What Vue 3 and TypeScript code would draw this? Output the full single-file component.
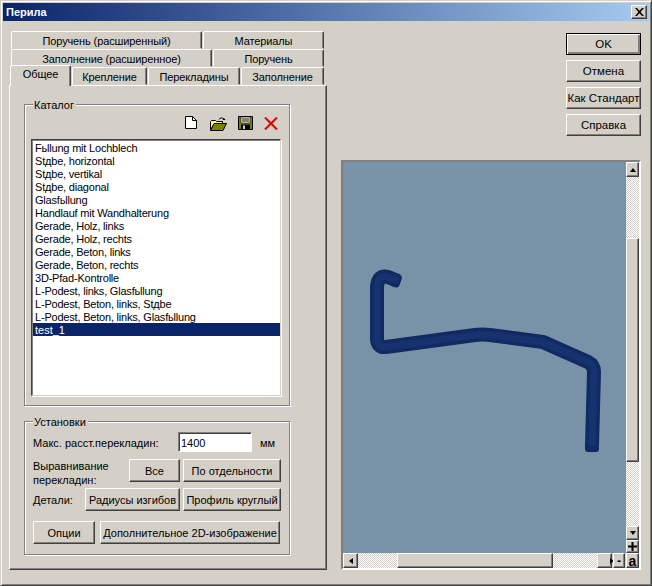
<script setup lang="ts">
const tabRows: { label: string; width: number; active?: boolean }[][] = [
  [
    { label: 'Поручень (расширенный)', width: 191 },
    { label: 'Материалы', width: 121 },
  ],
  [
    { label: 'Заполнение (расширенное)', width: 201 },
    { label: 'Поручень', width: 111 },
  ],
  [
    { label: 'Общее', width: 61, active: true },
    { label: 'Крепление', width: 75 },
    { label: 'Перекладины', width: 92 },
    { label: 'Заполнение', width: 83 },
  ],
]
const catalog = [
  'Fьllung mit Lochblech',
  'Stдbe, horizontal',
  'Stдbe, vertikal',
  'Stдbe, diagonal',
  'Glasfьllung',
  'Handlauf mit Wandhalterung',
  'Gerade, Holz, links',
  'Gerade, Holz, rechts',
  'Gerade, Beton, links',
  'Gerade, Beton, rechts',
  '3D-Pfad-Kontrolle',
  'L-Podest, links, Glasfьllung',
  'L-Podest, Beton, links, Stдbe',
  'L-Podest, Beton, links, Glasfьllung',
  'test_1',
]
const selected = 'test_1'
const tube = 'M398 281 L388 277 Q378 274 377 287 L377 338 Q377 348 386 347 L475 335 Q482 334 490 335 L543 342 L588 362 Q594 365 594 372 L592 446'
</script>

<template>
  <div class="window">
    <div class="titlebar">
      <span class="title">Перила</span>
      <button class="close" type="button" aria-label="Закрыть">
        <svg width="9" height="8" viewBox="0 0 9 8"><path d="M0 0h2l2.500 2.700L7 0h2L5.500 4 9 8H7L4.500 5.300 2 8H0l3.500-4z" fill="#000" /></svg>
      </button>
    </div>

    <div class="content">
      <div class="left">
        <div class="tabs">
          <div v-for="(row, i) in tabRows" :key="i" class="tab-row">
            <div
              v-for="tab in row"
              :key="tab.label"
              class="tab"
              :class="{ active: tab.active }"
              :style="{ width: tab.width + 'px' }"
            >{{ tab.label }}</div>
          </div>
        </div>

        <div class="panel">
          <section class="group catalog">
            <span class="legend">Каталог</span>
            <div class="toolbar">
              <svg class="ico doc" width="12" height="13" viewBox="0 0 12 13">
                <path d="M.500.500h7l4 4v8H.500z" fill="#fff" stroke="#000" />
                <path d="M7.500.500v4h4" fill="none" stroke="#000" />
              </svg>
              <svg class="ico open" width="17" height="14" viewBox="0 0 17 14">
                <path d="M9 2.500C10 .500 12.500.500 14 2" fill="none" stroke="#000" />
                <path d="M12.500 3h3l-1.500-2z" fill="#000" />
                <path d="M.500 13V4.500l1-1h4l1 1h6v2.500H4L.500 13z" fill="#ffff80" stroke="#000" />
                <path d="M.500 13.500 4 6.500h12.500l-3.500 7z" fill="#808000" stroke="#000" />
              </svg>
              <svg class="ico save" width="15" height="14" viewBox="0 0 15 14">
                <path d="M.500.500h14v13H.500z" fill="#808000" stroke="#000" />
                <path d="M3 1h9v6H3z" fill="#fff" stroke="#000" stroke-width=".600" />
                <path d="M4 3h7M4 5h7" stroke="#000" />
                <path d="M3 8.500h9V14H3z" fill="#000" />
                <path d="M5 9.500h2V13H5z" fill="#d4d0c8" />
              </svg>
              <svg class="ico del" width="14" height="13" viewBox="0 0 14 13">
                <path d="M1 .500l12 12M13 .500 1 12.500" stroke="#e00000" stroke-width="2" fill="none" />
              </svg>
            </div>
            <ul class="list">
              <li v-for="item in catalog" :key="item" :class="{ sel: item === selected }">{{ item }}</li>
            </ul>
          </section>

          <section class="group settings">
            <span class="legend">Установки</span>
            <div class="row row-spacing">
              <label class="spacing-label">Макс. расст.перекладин:</label>
              <input class="field" value="1400" />
              <span class="unit">мм</span>
            </div>
            <div class="row row-align">
              <span class="align-label">Выравнивание<br />перекладин:</span>
              <button class="btn w-all" type="button">Все</button>
              <button class="btn w-side" type="button">По отдельности</button>
            </div>
            <div class="row row-detail">
              <span class="detail-label">Детали:</span>
              <button class="btn w-bend" type="button">Радиусы изгибов</button>
              <button class="btn w-side" type="button">Профиль круглый</button>
            </div>
            <div class="row row-options">
              <button class="btn w-opt" type="button">Опции</button>
              <button class="btn w-2d" type="button">Дополнительное 2D-изображение</button>
            </div>
          </section>
        </div>
      </div>

      <div class="right">
        <div class="actions">
          <button class="btn act default" type="button">OK</button>
          <button class="btn act" type="button">Отмена</button>
          <button class="btn act" type="button">Как Стандарт</button>
          <button class="btn act" type="button">Справка</button>
        </div>

        <div class="viewer">
          <div class="viewer-top">
            <div class="canvas">
              <svg class="scene" width="283" height="391" viewBox="343 162 283 391">
                <rect x="585" y="442" width="14" height="10" rx="3" fill="#122a62" />
                <rect x="391" y="274" width="10" height="13" rx="3" fill="#122a62" transform="rotate(20 396 280)" />
                <path :d="tube" fill="none" stroke="#122a62" stroke-width="14" stroke-linejoin="round" stroke-linecap="butt" />
                <path :d="tube" fill="none" stroke="#17336f" stroke-width="7" stroke-linejoin="round" stroke-linecap="butt" />
              </svg>
            </div>
            <div class="vbar">
              <div class="sb-btn v up-btn"><i class="arrow up"></i></div>
              <div class="track v1"></div>
              <div class="thumb v2"></div>
              <div class="track v3"></div>
              <div class="sb-btn v"><i class="arrow down"></i></div>
              <div class="sb-btn v plus">
                <svg width="9" height="9" viewBox="0 0 9 9"><path d="M3.500 0h2v3.500H9v2H5.500V9h-2V5.500H0v-2h3.500z" fill="#000" /></svg>
              </div>
            </div>
          </div>
          <div class="hbar">
            <div class="sb-btn h"><i class="arrow left"></i></div>
            <div class="track h1"></div>
            <div class="thumb h2"></div>
            <div class="track h3"></div>
            <div class="sb-btn h"><i class="arrow right"></i></div>
            <div class="sb-btn minus">-</div>
            <div class="sb-btn auto">a</div>
          </div>
        </div>
      </div>
    </div>
  </div>
</template>

<style>
html, body { margin: 0; background: #d4d0c8; }
</style>

<style scoped>
* { box-sizing: border-box; }
.window {
  width: 652px;
  height: 586px;
  background: #d4d0c8;
  border-top: 1px solid #d4d0c8;
  border-left: 1px solid #d4d0c8;
  border-right: 1px solid #404040;
  border-bottom: 1px solid #404040;
  box-shadow: inset 1px 1px 0 #fff, inset -1px -1px 0 #808080;
  padding: 2px;
  font: 11px/14px "Liberation Sans", Arial, sans-serif;
  color: #000;
  overflow: hidden;
}
.titlebar {
  height: 18px;
  background: linear-gradient(90deg, #0a246a, #a6caf0);
  display: flex;
  align-items: center;
  justify-content: space-between;
  padding: 0 2px 0 3px;
}
.title { color: #fff; font-weight: 700; font-size: 11px; }
.close {
  width: 16px;
  height: 14px;
  padding: 0;
  background: #d4d0c8;
  border: 1px solid;
  border-color: #fff #404040 #404040 #fff;
  box-shadow: inset -1px -1px 0 #808080;
  display: flex;
  align-items: center;
  justify-content: center;
}
.content { display: flex; padding-left: 6px; padding-top: 10px; }
.left { width: 318px; }
.tabs { padding-left: 2px; }
.tab-row { display: flex; height: 18px; gap: 1px; }
.tab-row:last-child { margin-left: -1px; }
.tab {
  height: 18px;
  text-align: center;
  line-height: 18px;
  letter-spacing: -0.12px;
  background: #d4d0c8;
  border: 1px solid;
  border-color: #fff #404040 transparent #fff;
  border-radius: 2px 2px 0 0;
  box-shadow: inset -1px 0 0 #808080;
  white-space: nowrap;
}
.tab.active {
  position: relative;
  z-index: 2;
  height: 21px;
  margin-top: -2px;
  line-height: 17px;
  border-bottom: none;
}
.panel {
  position: relative;
  width: 318px;
  height: 485px;
  border: 1px solid;
  border-color: #fff #404040 #404040 #fff;
  box-shadow: inset -1px -1px 0 #808080;
  padding: 18px 0 0 14px;
}
.group {
  position: relative;
  width: 266px;
  border: 1px solid #808080;
  box-shadow: 1px 1px 0 #fff, inset 1px 1px 0 #fff;
}
.legend {
  position: absolute;
  left: 8px;
  top: -7px;
  background: #d4d0c8;
  padding: 0 2px 0 1px;
}
.catalog { height: 302px; padding: 11px 0 0 6px; }
.settings { height: 134px; margin-top: 15px; padding: 10px 0 0 8px; }
.toolbar { display: flex; align-items: flex-start; height: 23px; }
.ico { flex: none; }
.doc { margin-left: 154px; }
.open { margin-left: 13px; margin-top: 1px; }
.save { margin-left: 11px; }
.del { margin-left: 11px; margin-top: 1px; }
.list {
  list-style: none;
  margin: 0;
  padding: 1px 0 0;
  width: 250px;
  height: 257px;
  background: #fff;
  border: 1px solid;
  border-color: #404040 #d4d0c8 #d4d0c8 #404040;
  box-shadow: 1px 1px 0 #fff, inset 1px 1px 0 #808080;
}
.list li {
  height: 13px;
  line-height: 15px;
  margin-left: 1px;
  padding-left: 2px;
  letter-spacing: -0.2px;
  white-space: nowrap;
  overflow: hidden;
}
.list li.sel { background: #0a246a; color: #fff; letter-spacing: 0; }
.row { display: flex; align-items: flex-start; }
.row-spacing { height: 20px; }
.spacing-label { width: 145px; padding-top: 4px; }
.field {
  width: 74px;
  height: 20px;
  padding: 1px 0 0 2px;
  font: inherit;
  background: #fff;
  border: 1px solid;
  border-color: #808080 #fff #fff #808080;
  box-shadow: inset 1px 1px 0 #404040;
  outline: none;
}
.unit { margin-left: 8px; padding-top: 4px; }
.row-align { margin-top: 7px; height: 23px; }
.align-label { width: 96px; line-height: 14px; margin-top: 0; white-space: nowrap; }
.row-detail { margin-top: 6px; height: 23px; }
.detail-label { width: 52px; padding-top: 5px; }
.row-options { margin-top: 10px; height: 23px; gap: 5px; }
.btn {
  height: 23px;
  padding: 0;
  font: inherit;
  color: #000;
  background: #d4d0c8;
  border: 1px solid;
  border-color: #fff #404040 #404040 #fff;
  box-shadow: inset -1px -1px 0 #808080;
  white-space: nowrap;
  text-align: center;
}
.w-all { width: 51px; margin-right: 3px; }
.w-bend { width: 95px; margin-right: 3px; }
.w-side { width: 98px; }
.w-opt { width: 62px; }
.w-2d { width: 180px; }
.right {
  margin-left: 14px;
  width: 300px;
  display: flex;
  flex-direction: column;
  align-items: flex-end;
}
.actions { display: flex; flex-direction: column; gap: 5px; padding-top: 2px; }
.btn.act { width: 75px; height: 22px; font-size: 11.5px; }
.btn.default {
  outline: 1px solid #000;
  outline-offset: -1px;
  box-shadow: inset 1px 1px 0 #fff, inset -2px -2px 0 #808080;
}
.viewer {
  margin-top: 24px;
  width: 300px;
  height: 410px;
  border: 2px solid;
  border-color: #808080 #fff #fff #808080;
  box-shadow: inset 1px 1px 0 #404040;
  display: flex;
  flex-direction: column;
}
.viewer-top { display: flex; height: 391px; }
.canvas { width: 283px; height: 391px; background: #7893a8; overflow: hidden; }
.scene { display: block; }
.vbar { width: 13px; display: flex; flex-direction: column; }
.hbar { display: flex; height: 15px; }
.track { flex: none; background: repeating-conic-gradient(#d4d0c8 0 25%, #fff 0 50%) 0 0 / 2px 2px; }
.thumb { flex: none; }
.thumb, .sb-btn {
  background: #d4d0c8;
  border: 1px solid;
  border-color: #fff #404040 #404040 #fff;
  box-shadow: inset -1px -1px 0 #808080;
}
.sb-btn {
  flex: none;
  display: flex;
  align-items: center;
  justify-content: center;
  font-weight: 700;
}
.sb-btn.v { width: 13px; height: 14px; }
.sb-btn.up-btn { height: 15px; }
.sb-btn.h { width: 15px; height: 15px; }
.sb-btn.plus { height: 13px; }
.minus { width: 12px; height: 15px; margin-left: 1px; font-size: 12px; }
.auto { width: 13px; height: 15px; margin-left: 1px; font-size: 14px; line-height: 12px; }
.v1 { height: 61px; }
.v2 { height: 224px; }
.v3 { height: 64px; }
.h1 { width: 39px; }
.h2 { width: 156px; }
.h3 { width: 44px; }
.arrow { display: block; flex: none; width: 0; height: 0; border: 3px solid transparent; }
.arrow.up { border-bottom-color: #000; border-top-width: 0; border-bottom-width: 4px; }
.arrow.down { border-top-color: #000; border-bottom-width: 0; border-top-width: 4px; }
.arrow.left { border-right-color: #000; border-left-width: 0; border-right-width: 4px; }
.arrow.right { border-left-color: #000; border-right-width: 0; border-left-width: 4px; }
</style>
